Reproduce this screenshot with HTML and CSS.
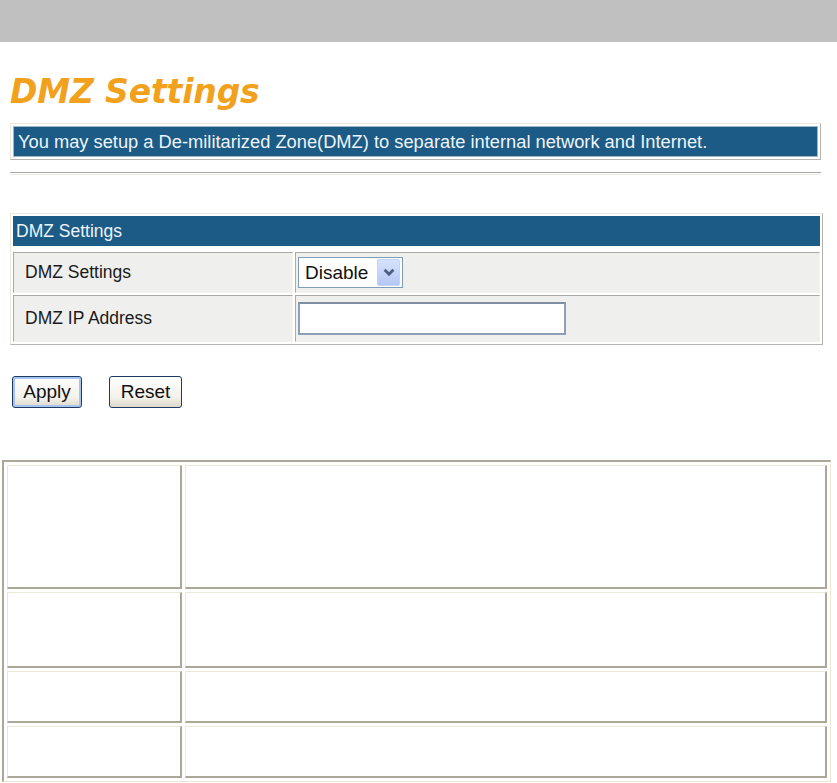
FILE: index.html
```html
<!DOCTYPE html>
<html>
<head>
<meta charset="utf-8">
<link rel="stylesheet" href="styles.css">
</head>
<body>
<div class="topbar"></div>
<div class="content">
  <h1 class="title">DMZ Settings</h1>
  <div class="banner"><div class="banner-inner">You may setup a De-militarized Zone(DMZ) to separate internal network and Internet.</div></div>
  <div class="rule"></div>
  <div class="cfg">
    <div class="cfg-head">DMZ Settings</div>
    <div class="cfg-row row-a">
      <div class="lbl">DMZ Settings</div>
      <div class="val">
        <div class="select"><span class="sel-text">Disable</span><span class="sel-btn"><svg width="12" height="9" viewBox="0 0 12 9"><path d="M1.6 1.8 L6 6.2 L10.4 1.8" fill="none" stroke="#4a5f86" stroke-width="2.8"/></svg></span></div>
      </div>
    </div>
    <div class="cfg-row row-b">
      <div class="lbl">DMZ IP Address</div>
      <div class="val"><div class="textbox"></div></div>
    </div>
  </div>
  <div class="buttons">
    <button class="btn btn-apply">Apply</button>
    <button class="btn btn-reset">Reset</button>
  </div>
</div>
<table class="info">
  <tr class="h1"><td class="c1"></td><td class="c2"></td></tr>
  <tr class="h2"><td class="c1"></td><td class="c2"></td></tr>
  <tr class="h3"><td class="c1"></td><td class="c2"></td></tr>
  <tr class="h3"><td class="c1"></td><td class="c2"></td></tr>
</table>
</body>
</html>
```
FILE: styles.css
```css
html, body {
  margin: 0;
  padding: 0;
  background: #ffffff;
}
body {
  width: 837px;
  height: 783px;
  overflow: hidden;
  font-family: "Liberation Sans", Arial, sans-serif;
}
.topbar {
  height: 42px;
  background: #c0c0c0;
}
.content {
  padding-left: 10px;
  width: 812px;
}
.title {
  margin: 30px 0 0 0;
  font-family: "DejaVu Sans", Verdana, sans-serif;
  font-weight: bold;
  font-style: italic;
  font-size: 33px;
  line-height: 39px;
  color: #f2a11d;
  letter-spacing: -0.15px;
}
.banner {
  margin-top: 12px;
  border-top: 1px solid #ece8dc;
  border-left: 1px solid #ece8dc;
  border-right: 1px solid #b4b4b0;
  border-bottom: 1px solid #b4b4b0;
  padding: 2px;
  width: 805px;
}
.banner-inner {
  background: #1b5b85;
  color: #eef4fa;
  height: 31px;
  line-height: 30px;
  padding-left: 4px;
  font-size: 18.3px;
  border: 1px solid #9fb7c8;
  box-sizing: border-box;
  white-space: nowrap;
}
.rule {
  margin-top: 12px;
  height: 1px;
  border-top: 1px solid #a8a8a4;
  border-bottom: 1px solid #ecebe6;
  width: 811px;
}
.cfg {
  margin-top: 38px;
  width: 807px;
  border-top: 1px solid #ece8dc;
  border-left: 1px solid #ece8dc;
  border-right: 1px solid #b4b4b0;
  border-bottom: 1px solid #b4b4b0;
  padding: 2px;
  display: grid;
  row-gap: 2px;
}
.cfg-head {
  background: #1b5b85;
  color: #eef4fa;
  height: 30px;
  line-height: 30px;
  padding-left: 3px;
  font-size: 17.5px;
  margin-bottom: 4px;
}
.cfg-row {
  display: grid;
  grid-template-columns: 280px 1fr;
  column-gap: 2px;
}
.row-a { height: 41px; }
.row-b { height: 47px; }
.lbl, .val {
  background: #efefee;
  border-top: 1px solid #a9a9a6;
  border-left: 1px solid #a9a9a6;
  border-right: 1px solid #f4f2ea;
  border-bottom: 1px solid #f4f2ea;
  display: flex;
  align-items: center;
}
.lbl {
  padding-left: 11px;
  font-size: 17.5px;
  color: #1a1a1a;
}
.val {
  padding-left: 2px;
}
.select {
  width: 105px;
  height: 31px;
  box-sizing: border-box;
  border: 1px solid #7f9db9;
  background: #fff;
  display: flex;
  align-items: center;
  justify-content: space-between;
  padding: 1px 2px 1px 6px;
}
.sel-text {
  font-size: 19px;
  color: #111;
}
.sel-btn {
  width: 23px;
  height: 27px;
  background: linear-gradient(#d6e2fc, #b4c7f4);
  border: 1px solid #c4d3f4;
  border-radius: 2px;
  display: flex;
  align-items: center;
  justify-content: center;
  box-sizing: border-box;
}
.textbox {
  width: 268px;
  height: 33px;
  box-sizing: border-box;
  border: 2px solid #8d9fb5;
  border-top-color: #7f8fa5;
  background: #fff;
}
.buttons {
  margin-top: 31px;
  display: flex;
  gap: 27px;
  padding-left: 2px;
}
.btn {
  font-family: "Liberation Sans", Arial, sans-serif;
  font-size: 19px;
  color: #111;
  height: 32px;
  padding: 0;
  border: 1px solid #1c3a64;
  border-radius: 3px;
  background: linear-gradient(#ffffff, #f2f1ea 70%, #dcd9cc);
  margin: 0;
}
.btn-apply {
  width: 70px;
  box-shadow: inset 0 0 0 2px #a9c3f0;
}
.btn-reset {
  width: 73px;
}
.info {
  margin: 52px 0 0 2px;
  width: 829px;
  border-collapse: separate;
  border-spacing: 3px;
  border-top: 2px solid #aca899;
  border-left: 2px solid #aca899;
  border-right: 1px solid #ece9d8;
  border-bottom: 1px solid #ece9d8;
}
.info td {
  padding: 0;
  border-top: 1px solid #ece9d8;
  border-left: 1px solid #ece9d8;
  border-right: 2px solid #aca899;
  border-bottom: 2px solid #aca899;
  background: #fff;
}
.info .c1 { width: 172px; }
.info .h1 td { height: 121px; }
.info .h2 td { height: 73px; }
.info .h3 td { height: 49px; }
```
